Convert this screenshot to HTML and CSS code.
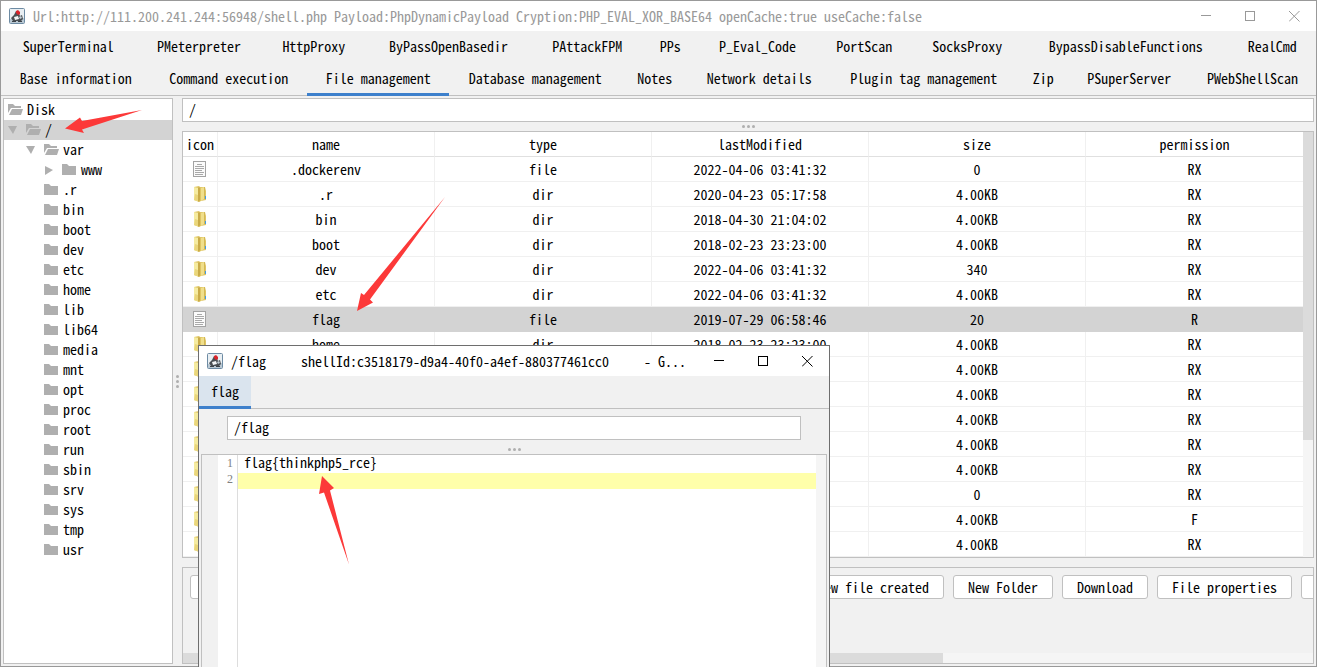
FILE: index.html
```html
<!DOCTYPE html>
<html lang="en">
  <head>
    <meta charset="UTF-8" />
    <meta name="viewport" content="width=device-width, initial-scale=1.0" />
    <title>Shell manager</title>
    <link rel="stylesheet" href="styles.css">
  </head>
  <body>
    <svg class="defs" width="0" height="0">
      <symbol id="java" viewBox="0 0 16 16">
        <rect x="0.5" y="0.5" width="15" height="15" rx="1" fill="#e9eff3" stroke="#6d8ba3" />
        <path d="M1 15v-4l14-1v5z" fill="#b9c8d3" />
        <path d="M2 10l3-3 2-4 3 2 1 3 2-1 1 4-2 2H4z" fill="#4a4f53" />
        <path d="M5 9l4-1 1 3-4 1z" fill="#f4f6f7" />
        <path d="M7 3l2-1 2 2v2l-2 1-2-2z" fill="#d8232a" />
        <path d="M10 9l2-1 1 2-2 1z" fill="#c2ced6" />
        <path d="M3 13h4v1H3zM9 13h4v1H9z" fill="#3c4247" />
      </symbol>
      <symbol id="open" viewBox="0 0 16 12">
        <path d="M0 9V0h5l2 2h6v2H3z" fill="#afafaf" />
        <path d="M4 5h11l-2 6H1z" fill="#afafaf" />
      </symbol>
      <symbol id="closed" viewBox="0 0 16 12">
        <path d="M0 0h5l2 2h7v9H0z" fill="#afafaf" />
      </symbol>
      <symbol id="dir" viewBox="0 0 14 16">
        <path d="M1 1l5-1 1 1h5l1 4v9l-5 1-2 1-5-2z" fill="#dfc565" />
        <path d="M1 1l4 1v13l-4-1z" fill="#f5eba0" />
        <path d="M2 8l3 1v6l-4-1z" fill="#ead67b" />
        <path d="M5 2l1-1 1 1v12l-1 2-1-1z" fill="#c9ab48" />
        <path d="M8 2l3-1v12l-3 2z" fill="#f0df8c" />
        <path d="M11 1h1v12h-1z" fill="#d4b855" />
        <path d="M12 10h1v3h-1z" fill="#3f9be6" />
      </symbol>
      <symbol id="file" viewBox="0 0 14 16">
        <rect x="0.5" y="0.5" width="12" height="15" fill="#fbfbfb" stroke="#a3a3a3" />
        <path d="M4 3.5h5M2 5.5h9M2 7.5h9M2 9.5h7M2 11.5h9M2 13.5h8" stroke="#a9a9a9" />
      </symbol>
      <symbol id="min" viewBox="0 0 11 11"><path d="M0 4.5h10" stroke="currentColor" /></symbol>
      <symbol id="max" viewBox="0 0 11 11"><rect x="0.5" y="0.5" width="9" height="9" fill="none" stroke="currentColor" /></symbol>
      <symbol id="close" viewBox="0 0 11 11"><path d="M0 0l10.500 10.500M10.500 0L0 10.500" stroke="currentColor" /></symbol>
    </svg>

    <div class="window">
      <header class="titlebar">
        <svg class="java"><use href="#java" /></svg>
        <span class="title">Url:http://111.200.241.244:56948/shell.php Payload:PhpDynamicPayload Cryption:PHP_EVAL_XOR_BASE64 openCache:true useCache:false</span>
        <button aria-label="Minimize"><svg><use href="#min" /></svg></button>
        <button aria-label="Maximize"><svg><use href="#max" /></svg></button>
        <button aria-label="Close"><svg><use href="#close" /></svg></button>
      </header>

      <nav class="tabs">
        <ul>
          <li><button>SuperTerminal</button></li>
          <li><button>PMeterpreter</button></li>
          <li><button>HttpProxy</button></li>
          <li><button>ByPassOpenBasedir</button></li>
          <li><button>PAttackFPM</button></li>
          <li><button>PPs</button></li>
          <li><button>P_Eval_Code</button></li>
          <li><button>PortScan</button></li>
          <li><button>SocksProxy</button></li>
          <li><button>BypassDisableFunctions</button></li>
          <li><button>RealCmd</button></li>
        </ul>
        <ul>
          <li><button>Base information</button></li>
          <li><button>Command execution</button></li>
          <li><button class="active">File management</button></li>
          <li><button>Database management</button></li>
          <li><button>Notes</button></li>
          <li><button>Network details</button></li>
          <li><button>Plugin tag management</button></li>
          <li><button>Zip</button></li>
          <li><button>PSuperServer</button></li>
          <li><button>PWebShellScan</button></li>
        </ul>
      </nav>

      <main class="content">
        <ul class="tree">
          <li><svg class="folder"><use href="#open" /></svg>Disk</li>
          <li class="selected"><i class="down"></i><svg class="folder"><use href="#open" /></svg>/</li>
          <li class="level1"><i class="down"></i><svg class="folder"><use href="#open" /></svg>var</li>
          <li class="level2"><i class="right"></i><svg class="folder"><use href="#closed" /></svg>www</li>
          <li class="leaf"><svg class="folder"><use href="#closed" /></svg>.r</li>
          <li class="leaf"><svg class="folder"><use href="#closed" /></svg>bin</li>
          <li class="leaf"><svg class="folder"><use href="#closed" /></svg>boot</li>
          <li class="leaf"><svg class="folder"><use href="#closed" /></svg>dev</li>
          <li class="leaf"><svg class="folder"><use href="#closed" /></svg>etc</li>
          <li class="leaf"><svg class="folder"><use href="#closed" /></svg>home</li>
          <li class="leaf"><svg class="folder"><use href="#closed" /></svg>lib</li>
          <li class="leaf"><svg class="folder"><use href="#closed" /></svg>lib64</li>
          <li class="leaf"><svg class="folder"><use href="#closed" /></svg>media</li>
          <li class="leaf"><svg class="folder"><use href="#closed" /></svg>mnt</li>
          <li class="leaf"><svg class="folder"><use href="#closed" /></svg>opt</li>
          <li class="leaf"><svg class="folder"><use href="#closed" /></svg>proc</li>
          <li class="leaf"><svg class="folder"><use href="#closed" /></svg>root</li>
          <li class="leaf"><svg class="folder"><use href="#closed" /></svg>run</li>
          <li class="leaf"><svg class="folder"><use href="#closed" /></svg>sbin</li>
          <li class="leaf"><svg class="folder"><use href="#closed" /></svg>srv</li>
          <li class="leaf"><svg class="folder"><use href="#closed" /></svg>sys</li>
          <li class="leaf"><svg class="folder"><use href="#closed" /></svg>tmp</li>
          <li class="leaf"><svg class="folder"><use href="#closed" /></svg>usr</li>
        </ul>
        <div class="splitter vertical"><i></i><i></i><i></i></div>
        <section class="files">
          <input type="text" class="path" aria-label="Directory" value="/" />
          <div class="splitter"><i></i><i></i><i></i></div>
          <div class="list">
            <table>
              <thead>
                <tr><th class="icon">icon</th><th>name</th><th>type</th><th>lastModified</th><th>size</th><th>permission</th></tr>
              </thead>
              <tbody>
                <tr><td><svg><use href="#file" /></svg></td><td>.dockerenv</td><td>file</td><td>2022-04-06 03:41:32</td><td>0</td><td>RX</td></tr>
                <tr><td><svg><use href="#dir" /></svg></td><td>.r</td><td>dir</td><td>2020-04-23 05:17:58</td><td>4.00KB</td><td>RX</td></tr>
                <tr><td><svg><use href="#dir" /></svg></td><td>bin</td><td>dir</td><td>2018-04-30 21:04:02</td><td>4.00KB</td><td>RX</td></tr>
                <tr><td><svg><use href="#dir" /></svg></td><td>boot</td><td>dir</td><td>2018-02-23 23:23:00</td><td>4.00KB</td><td>RX</td></tr>
                <tr><td><svg><use href="#dir" /></svg></td><td>dev</td><td>dir</td><td>2022-04-06 03:41:32</td><td>340</td><td>RX</td></tr>
                <tr><td><svg><use href="#dir" /></svg></td><td>etc</td><td>dir</td><td>2022-04-06 03:41:32</td><td>4.00KB</td><td>RX</td></tr>
                <tr class="selected"><td><svg><use href="#file" /></svg></td><td>flag</td><td>file</td><td>2019-07-29 06:58:46</td><td>20</td><td>R</td></tr>
                <tr><td><svg><use href="#dir" /></svg></td><td>home</td><td>dir</td><td>2018-02-23 23:23:00</td><td>4.00KB</td><td>RX</td></tr>
                <tr><td><svg><use href="#dir" /></svg></td><td></td><td></td><td></td><td>4.00KB</td><td>RX</td></tr>
                <tr><td><svg><use href="#dir" /></svg></td><td></td><td></td><td></td><td>4.00KB</td><td>RX</td></tr>
                <tr><td><svg><use href="#dir" /></svg></td><td></td><td></td><td></td><td>4.00KB</td><td>RX</td></tr>
                <tr><td><svg><use href="#dir" /></svg></td><td></td><td></td><td></td><td>4.00KB</td><td>RX</td></tr>
                <tr><td><svg><use href="#dir" /></svg></td><td></td><td></td><td></td><td>4.00KB</td><td>RX</td></tr>
                <tr><td><svg><use href="#dir" /></svg></td><td></td><td></td><td></td><td>0</td><td>RX</td></tr>
                <tr><td><svg><use href="#dir" /></svg></td><td></td><td></td><td></td><td>4.00KB</td><td>F</td></tr>
                <tr><td><svg><use href="#dir" /></svg></td><td></td><td></td><td></td><td>4.00KB</td><td>RX</td></tr>
              </tbody>
            </table>
            <div class="scroll"><div class="thumb"></div></div>
          </div>
          <div class="splitter"><i></i><i></i><i></i></div>
          <div class="actions">
            <div class="buttons">
              <button>Refresh</button>
              <button>Upload</button>
              <button>Move file</button>
              <button>Copy file</button>
              <button>Copy address</button>
              <button>Delete file</button>
              <button>New file created</button>
              <button>New Folder</button>
              <button>Download</button>
              <button>File properties</button>
              <button aria-label="Download large file"></button>
            </div>
            <div class="hscroll"><div class="thumb"></div></div>
          </div>
        </section>
      </main>
    </div>

    <div class="dialog" role="dialog" aria-label="/flag">
      <header class="titlebar">
        <svg class="java"><use href="#java" /></svg>
        <span class="title">/flag     shellId:c3518179-d9a4-40f0-a4ef-880377461cc0     - G...</span>
        <button aria-label="Minimize"><svg><use href="#min" /></svg></button>
        <button aria-label="Maximize"><svg><use href="#max" /></svg></button>
        <button aria-label="Close"><svg><use href="#close" /></svg></button>
      </header>
      <nav class="dialog-tabs"><button>flag</button></nav>
      <input type="text" class="path" aria-label="File" value="/flag" />
      <div class="splitter"><i></i><i></i><i></i></div>
      <div class="editor">
        <div class="fold"></div>
        <div class="numbers"><span>1</span><span>2</span></div>
        <div class="code">
          <div>flag{thinkphp5_rce}</div>
          <div class="current"></div>
        </div>
        <div class="scroll"></div>
      </div>
    </div>

    <svg class="marks" width="460" height="580">
      <path d="M65 128.500L80 117.500 82 121 142 110 82 129.500 84 133z" />
      <path d="M357 311L361 293 364 295 445 197 370 299.500 373 302.500z" />
      <path d="M322 476L319 494 324 492.500 349 564.500 330 490.500 334 488z" />
    </svg>
  </body>
</html>
```
FILE: styles.css
```css
* {
  box-sizing: border-box;
}
body {
  margin: 0;
  position: relative;
  height: 100vh;
  overflow: hidden;
  font-family: "Noto Sans Mono CJK SC", "Liberation Mono", monospace;
  font-size: 14px;
  line-height: 18px;
  color: #000;
}
button,
input {
  font: inherit;
  color: inherit;
  margin: 0;
  padding: 0;
  border: none;
  background: none;
}
ul {
  list-style: none;
  margin: 0;
  padding: 0;
}
svg {
  display: block;
}
.defs {
  position: absolute;
}
.window {
  display: flex;
  flex-direction: column;
  min-height: 100vh;
  border: 1px solid #999;
  background-color: #f1f1f1;
}

/* title bars */
.titlebar {
  display: flex;
  align-items: center;
  height: 30px;
  padding-left: 8px;
  background-color: #fff;
  color: #999;
}
.titlebar .java {
  width: 16px;
  height: 16px;
  margin-right: 8px;
  flex: none;
}
.title {
  flex: 1;
  white-space: pre;
}
.titlebar button {
  display: flex;
  align-items: center;
  justify-content: center;
  width: 44px;
  height: 30px;
}
.titlebar button svg {
  width: 11px;
  height: 11px;
}

/* tabs, each row spreads over the full width */
.tabs {
  border-bottom: 1px solid #c0c0c0;
}
.tabs ul {
  display: table;
  width: 100%;
}
.tabs li {
  display: table-cell;
}
.tabs button {
  display: block;
  width: 100%;
  height: 32px;
  padding: 0 14px 2px;
  white-space: nowrap;
}
.tabs ul:last-child {
  margin-bottom: -1px;
}
.tabs ul:last-child button {
  height: 33px;
  padding-bottom: 0;
  border-bottom: 3px solid transparent;
}
.tabs ul:last-child .active {
  border-color: #3d80cc;
}

.content {
  display: flex;
  flex: 1;
  padding: 2px;
}

/* directory tree */
.tree {
  width: 170px;
  flex: none;
  padding-top: 1px;
  border: 1px solid #c0c0c0;
  background-color: #fff;
}
.tree li {
  display: flex;
  align-items: flex-start;
  height: 20px;
  padding-left: 4px;
}
.tree .level1 {
  padding-left: 22px;
}
.tree .level2,
.tree .leaf {
  padding-left: 40px;
}
.selected {
  background-color: #d3d3d3;
}
.folder {
  width: 16px;
  height: 12px;
  margin: 4px 3px 0 0;
}
.down,
.right {
  width: 18px;
  height: 9px;
  margin-top: 6px;
  background-color: #afafaf;
  clip-path: polygon(0 0, 9px 0, 5px 8px);
}
.right {
  clip-path: polygon(1px 0, 9px 4px, 1px 9px);
}

/* split pane handles */
.splitter {
  display: flex;
  align-items: center;
  justify-content: center;
  gap: 2px;
  height: 9px;
}
.splitter i {
  width: 3px;
  height: 3px;
  border-radius: 50%;
  background-color: #afafaf;
}
.vertical {
  flex-direction: column;
  width: 9px;
  height: auto;
}

.files {
  display: flex;
  flex-direction: column;
  flex: 1;
  min-width: 0;
}
.path {
  height: 24px;
  padding: 0 6px 2px;
  border: 1px solid #c0c0c0;
  background-color: #fff;
}
.list {
  display: flex;
  border: 1px solid #c0c0c0;
}
table {
  flex: 1;
  width: 100%;
  table-layout: fixed;
  border-collapse: separate;
  border-spacing: 0;
  background-color: #fff;
  text-align: center;
}
th,
td {
  height: 25px;
  padding: 0 0 1px;
  font-weight: normal;
  border-right: 1px solid #f0f0f0;
  border-bottom: 1px solid #f0f0f0;
}
th {
  border-bottom-color: #e0e0e0;
}
th:last-child,
td:last-child {
  border-right: none;
}
.icon {
  width: 35px;
}
.selected td {
  border-color: #d3d3d3;
}
td svg {
  width: 14px;
  height: 16px;
  margin: 0 auto;
}
.scroll {
  flex: none;
  width: 10px;
  background-color: #f5f5f5;
}
.thumb {
  background-color: #dbdbdb;
}
.scroll .thumb {
  height: 308px;
}

/* bottom buttons */
.actions {
  display: flex;
  flex-direction: column;
  justify-content: space-between;
  flex: 1;
  overflow: hidden;
  border: 1px solid #c0c0c0;
}
.buttons {
  display: flex;
  gap: 9px;
  padding: 7px;
}
.buttons button {
  flex: none;
  height: 24px;
  padding: 0 14px 1px;
  border: 1px solid #c0c0c0;
  border-radius: 3px;
  background-color: #fff;
}
.hscroll {
  background-color: #f5f5f5;
}
.hscroll .thumb {
  width: 760px;
  height: 10px;
}

/* file viewer */
.dialog {
  position: absolute;
  top: 345px;
  left: 198px;
  bottom: 0;
  display: flex;
  flex-direction: column;
  width: 632px;
  border: 1px solid #6e6e6e;
  border-bottom: none;
  background-color: #f1f1f1;
}
.dialog .titlebar {
  flex: none;
  color: #000;
}
.dialog-tabs {
  border-bottom: 1px solid #c0c0c0;
}
.dialog-tabs button {
  display: block;
  height: 33px;
  margin-bottom: -1px;
  padding: 0 12px;
  border-bottom: 3px solid #3d80cc;
  background-color: #dae4ee;
}
.dialog .path {
  flex: none;
  margin: 7px 28px 5px;
}
.editor {
  display: flex;
  flex: 1;
  margin: 0 2px;
  border: 1px solid #c0c0c0;
  border-bottom: none;
  background-color: #fff;
  line-height: 16px;
}
.fold {
  width: 16px;
  background-color: #f1f1f1;
}
.numbers {
  display: flex;
  flex-direction: column;
  width: 20px;
  padding-right: 4px;
  border-right: 1px solid #ddd;
  font-family: "Liberation Serif", serif;
  font-size: 12px;
  text-align: right;
  color: #808080;
}
.code {
  flex: 1;
}
.code div {
  height: 16px;
  padding-left: 6px;
  line-height: 14px;
}
.code .current {
  margin-top: 2px;
  background-color: #ffffaa;
}

.marks {
  position: absolute;
  top: 0;
  left: 0;
  fill: #fc3939;
  pointer-events: none;
}
```
